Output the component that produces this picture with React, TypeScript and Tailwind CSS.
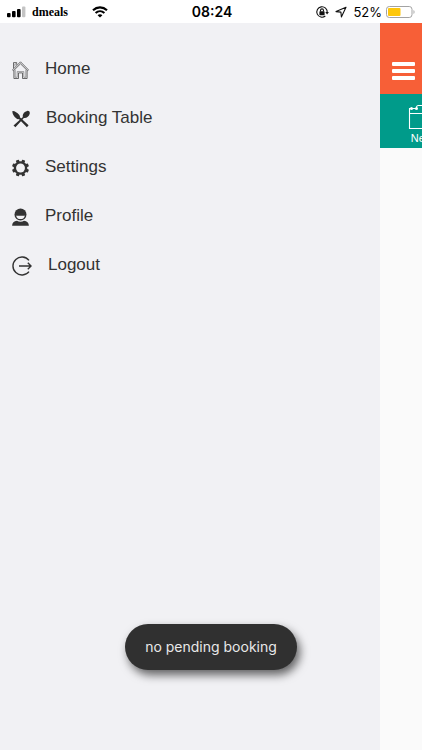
import type { ReactNode } from 'react'

function SignalIcon() {
  return (
    <svg viewBox="0 0 20 12" className="h-3 w-5" aria-hidden="true">
      <rect x="1" y="7" width="3.6" height="4.2" rx="1" fill="#000" />
      <rect x="6" y="5" width="3.6" height="6.2" rx="1" fill="#000" />
      <rect x="11" y="3" width="3.6" height="8.2" rx="1" fill="#000" />
      <rect x="16" y="0.5" width="3.4" height="10.7" rx="1" fill="#c4c4c4" />
    </svg>
  )
}

function WifiIcon() {
  return (
    <svg viewBox="0 0 16 12" className="h-3 w-4" fill="none" stroke="#000" strokeWidth="2.1" aria-hidden="true">
      <path d="M1 4.2C5 .4 11 .4 15 4.2" />
      <path d="M3.6 7C6.2 4.6 9.8 4.6 12.4 7" />
      <path d="M8 11.6 5.6 9.2c1.3-1.2 3.5-1.2 4.8 0z" fill="#000" stroke="none" />
    </svg>
  )
}

function RotationLockIcon() {
  return (
    <svg viewBox="0 0 14 14" className="h-3.5 w-3.5" fill="none" stroke="#111" strokeWidth="1.1" aria-hidden="true">
      <path d="M10.3 11A5.2 5.2 0 1 1 12.2 7.4" />
      <path d="M10.3 6.9h3.6l-1.8 2.5z" fill="#111" stroke="none" />
      <rect x="4.4" y="6.3" width="5.2" height="3.9" rx=".6" fill="#111" stroke="none" />
      <path d="M5.5 6.5V5.4a1.5 1.5 0 0 1 3 0v1.1" />
    </svg>
  )
}

function LocationIcon() {
  return (
    <svg viewBox="0 0 12 12" className="h-3 w-3" fill="none" stroke="#111" strokeWidth="1.1" strokeLinejoin="round" aria-hidden="true">
      <path d="M11 1.2 1 5.6l4.9.5.5 4.9z" />
    </svg>
  )
}

function BatteryIcon() {
  return (
    <svg viewBox="0 0 30 12" className="h-3 w-[30px]" aria-hidden="true">
      <rect x=".5" y=".5" width="25.5" height="11" rx="2.8" fill="#fff" stroke="#a3a3a3" />
      <rect x="2" y="2" width="12.5" height="8" rx="1" fill="#fdc70c" />
      <path d="M27.5 4v4c1.4-.5 1.4-3.5 0-4z" fill="#a3a3a3" />
    </svg>
  )
}

function StatusBar() {
  return (
    <header className="grid h-[23px] grid-cols-3 items-center bg-white text-black">
      <div className="flex items-center pl-1.5">
        <SignalIcon />
        <span className="ml-1.5 font-['Liberation_Serif',serif] text-[12px] leading-4 font-bold">dmeals</span>
        <span className="ml-6"><WifiIcon /></span>
      </div>
      <span className="pl-0.5 text-center font-['Inter',sans-serif] text-[14px] leading-4 font-semibold">08:24</span>
      <div className="flex items-center justify-end pr-1.5">
        <RotationLockIcon />
        <span className="ml-1.5"><LocationIcon /></span>
        <span className="mr-1 ml-1.5 font-['Inter',sans-serif] text-[13px] leading-4">52%</span>
        <BatteryIcon />
      </div>
    </header>
  )
}

function HomeIcon() {
  return (
    <svg viewBox="0 0 17 18" className="h-[18px] w-[17px]" fill="none" stroke="#484848" strokeWidth=".8" strokeLinejoin="round" aria-hidden="true">
      <path d="M1.5 7.4V1.6h3.2v2.2" />
      <path d="M2.9 5.4V2.9h1" strokeWidth=".5" />
      <path d="m.5 8.9 8-8.1 8 8.1-.9.9-7.100-7-7.100 7z" />
      <path d="M1.900 9.700v7.800h4.600v-5.600h4v5.600h4.600V9.700" />
      <path d="M3.200 8.800v7.500h2v-5.700h6.600v5.700h2V8.800" strokeWidth=".5" />
    </svg>
  )
}

function CutleryIcon() {
  return (
    <svg viewBox="0 0 18 18" className="h-[18px] w-[18px]" fill="#2d2d2d" aria-hidden="true">
      <path d="M.4 1C2.3.6 5.200 2.500 7.100 4.800c.8 1 1 1.900.8 2.500l8.700 8-1.700 1.900-8-8.300c-.7.5-1.600.4-2.400-.3C2 6.500 0 3.800.4 1z" />
      <path d="M10.900 7c-.9-2.200 1.200-5.600 4.200-6.100 1.900-.3 3 .9 2.600 2.800-.6 2.900-3.800 4.900-5.800 4.200L3.400 17.200l-1.900-1.800z" />
    </svg>
  )
}

function GearIcon() {
  return (
    <svg viewBox="0 0 18 18" className="h-[18px] w-[17px]" fill="#333" aria-hidden="true">
      <rect x="7.3" y="0" width="3.4" height="18" rx=".5" transform="rotate(22.5 9 9)" />
      <rect x="7.3" y="0" width="3.4" height="18" rx=".5" transform="rotate(67.5 9 9)" />
      <rect x="7.3" y="0" width="3.4" height="18" rx=".5" transform="rotate(112.5 9 9)" />
      <rect x="7.3" y="0" width="3.4" height="18" rx=".5" transform="rotate(157.5 9 9)" />
      <circle cx="9" cy="9" r="7.2" />
      <circle cx="9" cy="9" r="4.7" fill="#f1f1f4" />
    </svg>
  )
}

function ProfileIcon() {
  return (
    <svg viewBox="0 0 17 18" className="h-[18px] w-[17px]" fill="#333" aria-hidden="true">
      <circle cx="8.5" cy="6.5" r="6" />
      <path d="M4.200 7.400c1.500.4 7.100.4 8.600 0 0 2.300-2 3.700-4.300 3.700S4.200 9.700 4.200 7.400z" fill="#f1f1f4" />
      <path d="M.1 17.700c0-2.900 1.900-4.300 4.900-4.900 1.800 1.200 5.200 1.200 7 0 3 .6 4.900 2 4.900 4.900z" />
    </svg>
  )
}

function LogoutIcon() {
  return (
    <svg viewBox="0 0 20 20" className="h-5 w-5" fill="none" stroke="#333" strokeWidth="1.4" aria-hidden="true">
      <path d="M17 4.4A9 9 0 1 0 17 15.6" />
      <path d="M7 10h12M15.8 6.8 19 10l-3.2 3.2" />
    </svg>
  )
}

function CalendarIcon() {
  return (
    <svg viewBox="0 0 28 26" className="h-[26px] w-7 shrink-0" fill="none" stroke="#fff" strokeWidth="1.1" aria-hidden="true">
      <path d="M8.5 4.500H1.500v20h25v-20h-7M1.500 9.500h25M8.500 4.500v-1q0-2 2-2h7q2 0 2 2v1" />
      <circle cx="3.500" cy="4.500" r="1.500" fill="#fff" stroke="none" />
      <circle cx="8.500" cy="4.500" r="1.500" fill="#fff" stroke="none" />
    </svg>
  )
}

const items: { label: string; icon: ReactNode }[] = [
  { label: 'Home', icon: <HomeIcon /> },
  { label: 'Booking Table', icon: <CutleryIcon /> },
  { label: 'Settings', icon: <GearIcon /> },
  { label: 'Profile', icon: <ProfileIcon /> },
  { label: 'Logout', icon: <LogoutIcon /> },
]

function Drawer() {
  return (
    <nav className="w-9/10 shrink-0 bg-[#f1f1f4] pt-[21px]">
      <ul>
        {items.map(({ label, icon }) => (
          <li key={label}>
            <a href="#" className="flex h-[49px] items-center gap-4 pl-3 text-[17px] leading-5 text-[#333]">
              <span className="pt-0.5">{icon}</span>
              {label}
            </a>
          </li>
        ))}
      </ul>
    </nav>
  )
}

// main screen, pushed aside by the open drawer
function Screen() {
  return (
    <main className="min-w-0 flex-1 overflow-hidden bg-[#fafafa]">
      <div className="flex h-[71px] items-end bg-[#f75f37] pb-3.5 pl-3">
        <button type="button" aria-label="Menu" className="flex w-[23px] shrink-0 flex-col gap-[3px]">
          <span className="h-1 rounded-[1px] bg-white" />
          <span className="h-1 rounded-[1px] bg-white" />
          <span className="h-1 rounded-[1px] bg-white" />
        </button>
      </div>
      <div className="flex h-[54px] bg-[#009b8a] pt-2.5 pl-7">
        <button type="button" className="flex shrink-0 flex-col items-center text-[11px] leading-4 text-white">
          <CalendarIcon />
          New
        </button>
      </div>
    </main>
  )
}

export default function App() {
  return (
    <div className="relative flex min-h-screen flex-col font-['Liberation_Sans',Arial,sans-serif]">
      <StatusBar />
      <div className="flex flex-1">
        <Drawer />
        <Screen />
      </div>
      <div className="absolute inset-x-0 bottom-20 flex justify-center">
        <div role="status" className="rounded-full bg-[#303030] px-5 py-3 font-['Inter',sans-serif] text-[14px] leading-[22px] text-[#e8e8e8] shadow-[3px_5px_10px_rgba(0,0,0,0.6)]">
          no pending booking
        </div>
      </div>
    </div>
  )
}
